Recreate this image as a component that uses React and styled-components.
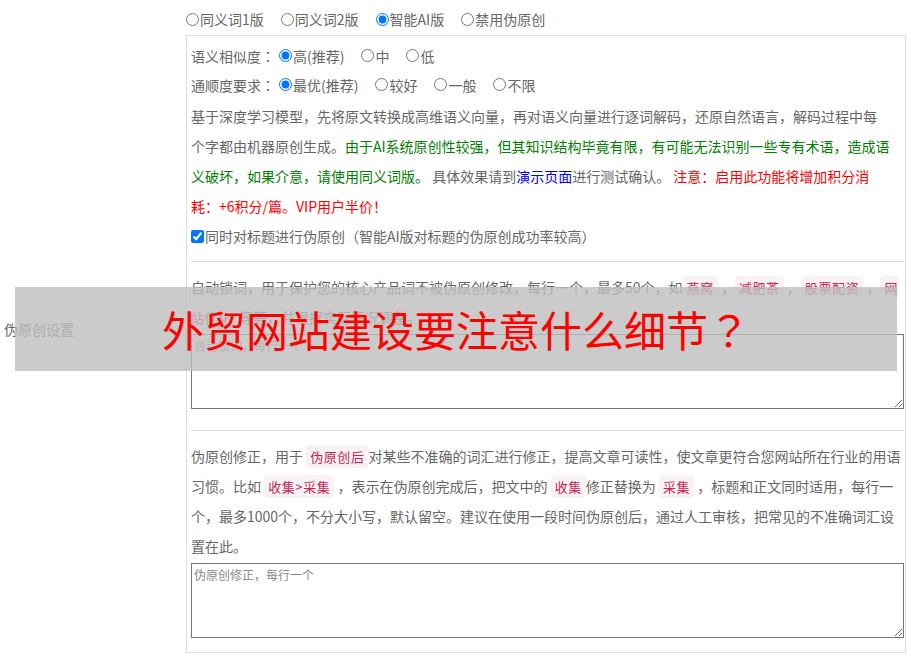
import React from 'react'
import styled, { createGlobalStyle } from 'styled-components'

const GlobalStyle = createGlobalStyle`
    html, body {
        margin: 0;
        padding: 0;
        background: #fff;
    }
    body {
        font-family: "Noto Sans CJK SC", "Liberation Sans", sans-serif;
        font-size: 14px;
        color: #666;
    }
`

const Page = styled.div`
    position: relative;
    display: grid;
    grid-template-columns: 186px 1fr;
    padding-right: 5px;
    min-height: 658px;
`

const LabelCell = styled.div`
    display: flex;
    align-items: center;
    padding-left: 4px;
    font-size: 14px;
    color: #666;
`

const Content = styled.div`
    padding-top: 4px;
`

const ChoiceRow = styled.div`
    display: flex;
    align-items: center;
    height: ${(p) => p.$h || 30}px;
    white-space: nowrap;
`

const Choice = styled.label`
    display: flex;
    align-items: center;
    margin-right: ${(p) => p.$gap ?? 17}px;
`

const Radio = styled.input.attrs({ type: 'radio' })`
    width: 13px;
    height: 13px;
    margin: 0 1px 0 ${(p) => p.$ml || 0}px;
`

const Panel = styled.div`
    margin-top: 1px;
    border: 1px solid #ddd;
    padding: 5px 1px 14px 4px;
`

const Para = styled.p`
    margin: ${(p) => p.$mt || 0}px ${(p) => p.$mr || 0}px 0 0;
    line-height: 30px;
`

const Green = styled.span`
    color: green;
`
const Red = styled.span`
    color: red;
`
const Link = styled.a`
    color: blue;
    text-decoration: none;
`

const Tag = styled.code`
    font-family: "Noto Sans CJK SC", sans-serif;
    font-size: 13px;
    line-height: 1;
    letter-spacing: 0.6px;
    color: #c7254e;
    background: #f9f2f4;
    border-radius: 4px;
    padding: 2px 4px;
`

const CheckRow = styled.label`
    display: flex;
    align-items: center;
    height: 30px;
`

const Check = styled.input.attrs({ type: 'checkbox' })`
    width: 13px;
    height: 13px;
    margin: 0 1px 0 0;
`

const Divider = styled.hr`
    border: none;
    border-top: 1px solid #ddd;
    margin: ${(p) => p.$mt || 10}px 0 10px;
`

const TextBox = styled.textarea`
    display: block;
    box-sizing: border-box;
    width: 100%;
    height: 75px;
    margin-top: 2px;
    padding: 2px;
    border: 1px solid #767676;
    font-family: "Noto Sans CJK SC", sans-serif;
    font-size: 12px;
    color: #333;
    resize: vertical;
    &::placeholder {
        color: #8a8a8a;
    }
`

const Banner = styled.div`
    position: absolute;
    left: 15px;
    top: 287px;
    width: 882px;
    height: 84px;
    background: rgba(190, 190, 190, 0.8);
    display: flex;
    align-items: center;
    justify-content: center;
    color: red;
    font-size: 42px;
    font-family: "Noto Sans CJK SC", sans-serif;
    line-height: 1;
`

const WideMark = styled.span`
    font-family: "Noto Sans CJK TC", "Noto Sans CJK SC", sans-serif;
`

export default function App() {
    return (
        <Page>
            <GlobalStyle />
            <LabelCell>伪原创设置</LabelCell>
            <Content>
                <ChoiceRow>
                    <Choice><Radio name="mode" />同义词1版</Choice>
                    <Choice><Radio name="mode" />同义词2版</Choice>
                    <Choice><Radio name="mode" defaultChecked />智能AI版</Choice>
                    <Choice><Radio name="mode" />禁用伪原创</Choice>
                </ChoiceRow>
                <Panel>
                    <ChoiceRow $h={29}>
                        语义相似度<WideMark>：</WideMark>
                        <Choice><Radio name="sim" $ml={4} defaultChecked />高(推荐)</Choice>
                        <Choice><Radio name="sim" />中</Choice>
                        <Choice><Radio name="sim" />低</Choice>
                    </ChoiceRow>
                    <ChoiceRow $h={29}>
                        通顺度要求<WideMark>：</WideMark>
                        <Choice><Radio name="flu" $ml={4} defaultChecked />最优(推荐)</Choice>
                        <Choice><Radio name="flu" />较好</Choice>
                        <Choice><Radio name="flu" />一般</Choice>
                        <Choice><Radio name="flu" />不限</Choice>
                    </ChoiceRow>
                    <Para $mt={2} $mr={13.5}>
                        基于深度学习模型，先将原文转换成高维语义向量，再对语义向量进行逐词解码，还原自然语言，解码过程中每个字都由机器原创生成。
                        <Green>由于AI系统原创性较强，但其知识结构毕竟有限，有可能无法识别一些专有术语，造成语义破坏，如果介意，请使用同义词版。</Green>{' '}
                        具体效果请到<Link href="#">演示页面</Link>进行测试确认。{' '}
                        <Red>注意：启用此功能将增加积分消耗：+6积分/篇。VIP用户半价！</Red>
                    </Para>
                    <CheckRow>
                        <Check defaultChecked />
                        同时对标题进行伪原创（智能AI版对标题的伪原创成功率较高）
                    </CheckRow>
                    <Divider />
                    <Para>
                        自动锁词，用于保护您的核心产品词不被伪原创修改，每行一个，最多50个，如<Tag>燕窝</Tag> ，<Tag>减肥茶</Tag> ，<Tag>股票配资</Tag> ，<Tag>网站优化</Tag> 等等，并根据实际情况调整。
                    </Para>
                    <TextBox placeholder="自动锁词，每行一个" />
                    <Divider $mt={21} />
                    <Para>
                        伪原创修正，用于 <Tag>伪原创后</Tag>对某些不准确的词汇进行修正，提高文章可读性，使文章更符合您网站所在行业的用语习惯。比如 <Tag>收集&gt;采集</Tag> ，表示在伪原创完成后，把文中的 <Tag>收集</Tag>修正替换为 <Tag>采集</Tag> ，标题和正文同时适用，每行一个，最多1000个，不分大小写，默认留空。建议在使用一段时间伪原创后，通过人工审核，把常见的不准确词汇设置在此。
                    </Para>
                    <TextBox placeholder="伪原创修正，每行一个" />
                </Panel>
            </Content>
            <Banner>外贸网站建设要注意什么细节<WideMark>？</WideMark></Banner>
        </Page>
    )
}
